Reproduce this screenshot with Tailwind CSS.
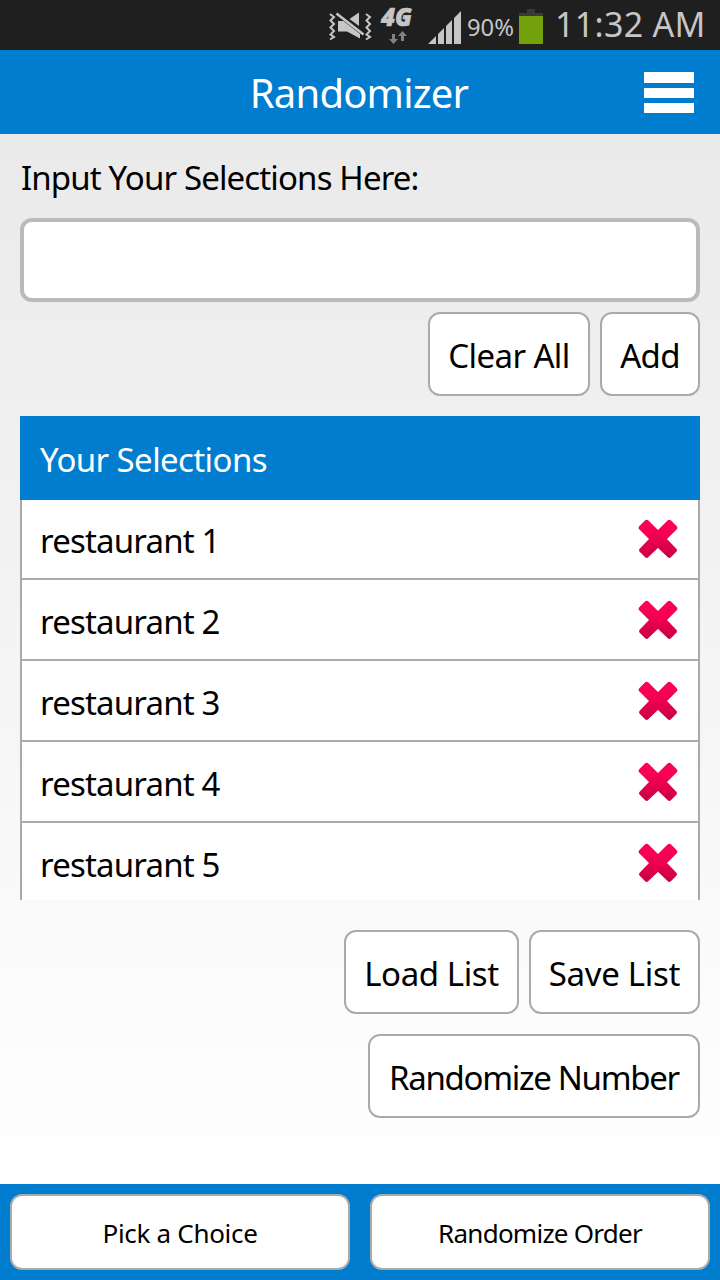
<!DOCTYPE html>
<html lang="en">
<head>
<meta charset="utf-8">
<title>Randomizer</title>
<script src="https://cdn.jsdelivr.net/npm/@tailwindcss/browser@4"></script>
</head>
<body class="w-[720px] h-[1280px] overflow-hidden flex flex-col font-['Noto_Sans',sans-serif] text-black text-[33px] whitespace-nowrap bg-white">
  <div class="h-[50px] shrink-0 bg-[#1f1f1f] flex items-center text-[#c6c6c6]">
    <svg class="w-[225px] h-[50px] ml-[320px]" viewBox="320 0 225 50" fill="none">
      <g stroke="#c6c6c6" stroke-width="2">
        <path d="M330 14l4 3-3.500 3.500 3.500 3.500-3.500 3.500 3.500 3.500-3.500 3.500 3.500 2.500-4 2.500"/>
        <path d="M366 14l4 3-3.500 3.500 3.500 3.500-3.500 3.500 3.500 3.500-3.500 3.500 3.500 2.500-4 2.500"/>
      </g>
      <path d="M338 21h5.500L360 34v4.500L347 31.500h-9zM349.500 19l9.500-6.500v13.500z" fill="#c6c6c6"/>
      <path d="M336.500 13.500l27 21" stroke="#c6c6c6" stroke-width="2.600"/>
      <text x="381" y="26" font-family="Open Sans" font-weight="800" font-style="italic" font-size="24" textLength="31" lengthAdjust="spacingAndGlyphs" fill="#c6c6c6" stroke="#c6c6c6" stroke-width=".6">4G</text>
      <path d="M392 34h3v5h3l-4.500 5-4.500-5h3zM401 41h3v-5h3l-4.500-5-4.500 5h3z" fill="#828282"/>
      <path d="M428 44l8-8v8zM438 44V34l6-6v16zM446 44V26l6-6v24zM454 44V18l7-7v33z" fill="#c6c6c6"/>
      <text x="467" y="35.500" font-family="Noto Sans" font-size="24" textLength="47" lengthAdjust="spacingAndGlyphs" fill="#c6c6c6">90%</text>
      <path d="M519 13h8V9h8v4h8v4h-24z" fill="#393939"/>
      <path d="M519 16h24v28h-24z" fill="#72a10b"/>
    </svg>
    <span class="ml-[10px] -mt-[2px] text-[34px] leading-[50px] tracking-[0.3px]">11:32 AM</span>
  </div>

  <header class="h-[84px] shrink-0 bg-[#007dcf] grid grid-cols-[1fr_auto_1fr] items-center text-white">
    <span></span>
    <h1 class="text-[40px] leading-[84px] pt-px pr-[2px] tracking-[-0.8px]">Randomizer</h1>
    <div class="justify-self-end mr-[26px] flex flex-col gap-[5px]">
      <span class="w-[50px] h-[11px] bg-white"></span>
      <span class="w-[50px] h-[10px] bg-white"></span>
      <span class="w-[50px] h-[10px] bg-white"></span>
    </div>
  </header>

  <main class="h-[1050px] shrink-0 px-5 bg-linear-to-b from-[#eaeaea] to-white flex flex-col">
    <label for="entry" class="h-[84px] leading-[84px] pt-[2px] pl-px tracking-[-0.86px]">Input Your Selections Here:</label>
    <input id="entry" class="h-[84px] w-full rounded-[12px] border-4 border-[#bababa] bg-white">
    <div class="mt-[10px] flex justify-end gap-[10px]">
      <button class="w-[162px] h-[84px] pt-[3px] rounded-[12px] border-2 border-[#aaa] bg-white tracking-[-0.6px]">Clear All</button>
      <button class="w-[100px] h-[84px] pt-[3px] rounded-[12px] border-2 border-[#aaa] bg-white tracking-[-0.7px]">Add</button>
    </div>
    <section class="mt-5 h-[484px] overflow-hidden">
      <h2 class="relative z-10 h-[84px] leading-[84px] pt-[2px] pl-5 bg-[#007dcf] text-white tracking-[-0.6px]">Your Selections</h2>
      <ul id="rows" class="-mt-px border-x-2 border-[#aaa] bg-white"></ul>
    </section>
    <div class="mt-[30px] flex justify-end gap-[10px]">
      <button class="w-[175px] h-[84px] pt-[3px] rounded-[12px] border-2 border-[#aaa] bg-white tracking-[-0.4px]">Load List</button>
      <button class="w-[171px] h-[84px] pt-[3px] rounded-[12px] border-2 border-[#aaa] bg-white tracking-[-0.3px]">Save List</button>
    </div>
    <div class="mt-5 flex justify-end">
      <button class="w-[332px] h-[84px] pt-[3px] rounded-[12px] border-2 border-[#aaa] bg-white tracking-[-1.3px]">Randomize Number</button>
    </div>
  </main>

  <footer class="h-[96px] shrink-0 bg-[#007dcf] p-[10px] grid grid-cols-2 gap-5 text-[26px]">
    <button class="pt-[2px] rounded-[12px] border-2 border-[#aaa] bg-white tracking-[-0.3px]">Pick a Choice</button>
    <button class="pt-[2px] rounded-[12px] border-2 border-[#aaa] bg-white tracking-[-0.75px]">Randomize Order</button>
  </footer>

  <template id="row">
    <li class="h-[81px] border-b-2 border-[#aaa] pl-[18px] pr-5 flex items-center justify-between">
      <span class="pt-[5px] tracking-[-0.82px]"></span>
      <svg class="w-10 h-10" viewBox="0 0 40 40">
        <defs><linearGradient id="cross" x1="0" y1="0" x2="0" y2="1"><stop offset="0" stop-color="#ff0058"/><stop offset=".45" stop-color="#f20052"/><stop offset="1" stop-color="#cb0045"/></linearGradient></defs>
        <path d="M31.300 3.400L36.800 8.700 25.500 20 36.300 31.300 31.300 36.300 20 25.500 8.700 36.300 3.700 31.300 14.500 20 3.200 8.700 8.700 3.400 20 14.500z" fill="url(#cross)" stroke="url(#cross)" stroke-width="5" stroke-linejoin="round"/>
      </svg>
    </li>
  </template>
  <script>
    const list = document.getElementById('rows');
    for (let n = 1; n <= 5; n++) {
      const row = document.getElementById('row').content.cloneNode(true);
      row.querySelector('span').textContent = 'restaurant ' + n;
      list.append(row);
    }
  </script>
</body>
</html>
